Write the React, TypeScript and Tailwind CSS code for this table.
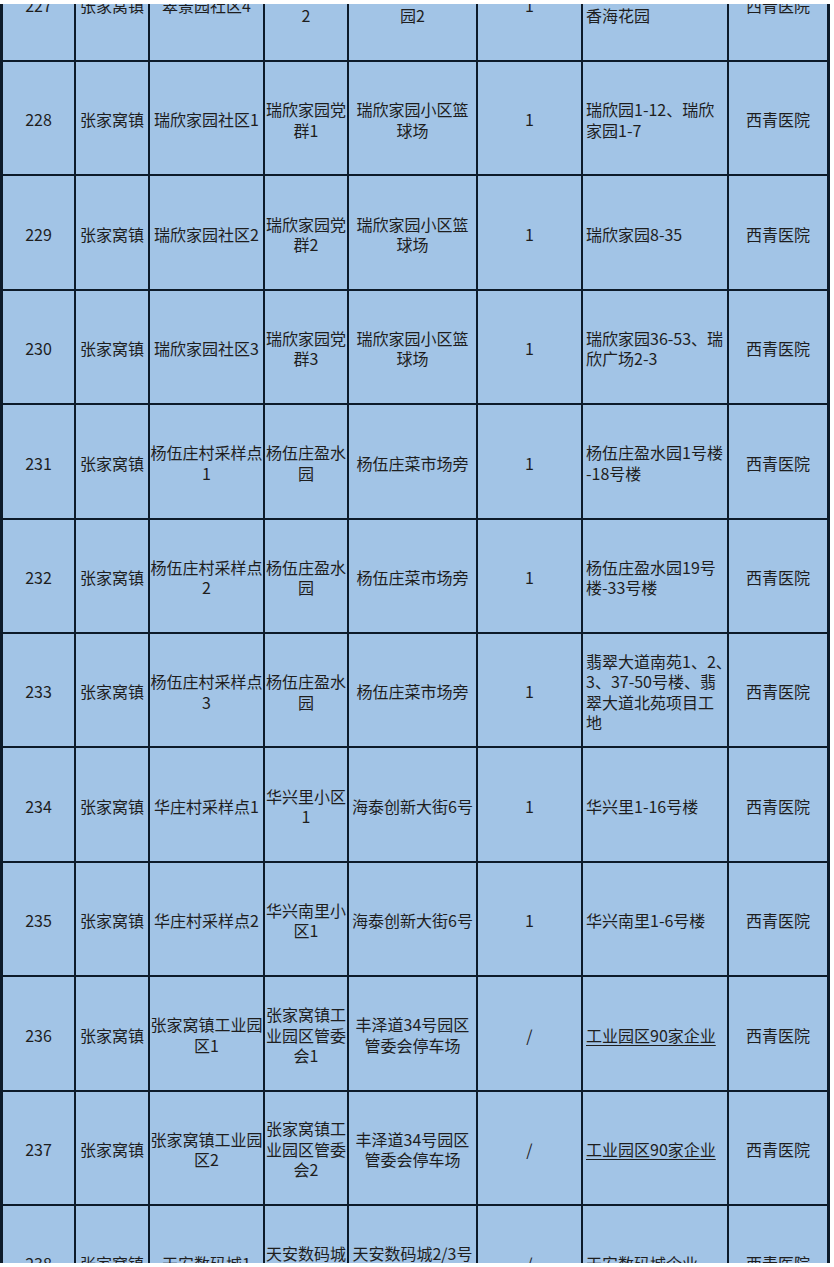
import React from 'react';

type Row = {
  no: string;
  town: string;
  site: string;
  group: string;
  place: string;
  count: string;
  area: string;
  hospital: string;
  link?: boolean;
};

const rows: Row[] = [
  { no: '227', town: '张家窝镇', site: '翠景园社区4', group: '翠景园党群\n2', place: '翠景园小区中心花\n园2', count: '1', area: '翠景园1-20号、\n香海花园', hospital: '西青医院' },
  { no: '228', town: '张家窝镇', site: '瑞欣家园社区1', group: '瑞欣家园党\n群1', place: '瑞欣家园小区篮\n球场', count: '1', area: '瑞欣园1-12、瑞欣\n家园1-7', hospital: '西青医院' },
  { no: '229', town: '张家窝镇', site: '瑞欣家园社区2', group: '瑞欣家园党\n群2', place: '瑞欣家园小区篮\n球场', count: '1', area: '瑞欣家园8-35', hospital: '西青医院' },
  { no: '230', town: '张家窝镇', site: '瑞欣家园社区3', group: '瑞欣家园党\n群3', place: '瑞欣家园小区篮\n球场', count: '1', area: '瑞欣家园36-53、瑞\n欣广场2-3', hospital: '西青医院' },
  { no: '231', town: '张家窝镇', site: '杨伍庄村采样点\n1', group: '杨伍庄盈水\n园', place: '杨伍庄菜市场旁', count: '1', area: '杨伍庄盈水园1号楼\n-18号楼', hospital: '西青医院' },
  { no: '232', town: '张家窝镇', site: '杨伍庄村采样点\n2', group: '杨伍庄盈水\n园', place: '杨伍庄菜市场旁', count: '1', area: '杨伍庄盈水园19号\n楼-33号楼', hospital: '西青医院' },
  { no: '233', town: '张家窝镇', site: '杨伍庄村采样点\n3', group: '杨伍庄盈水\n园', place: '杨伍庄菜市场旁', count: '1', area: '翡翠大道南苑1、2、\n3、37-50号楼、翡\n翠大道北苑项目工\n地', hospital: '西青医院' },
  { no: '234', town: '张家窝镇', site: '华庄村采样点1', group: '华兴里小区\n1\n', place: '海泰创新大街6号', count: '1', area: '华兴里1-16号楼', hospital: '西青医院' },
  { no: '235', town: '张家窝镇', site: '华庄村采样点2', group: '华兴南里小\n区1', place: '海泰创新大街6号', count: '1', area: '华兴南里1-6号楼', hospital: '西青医院' },
  { no: '236', town: '张家窝镇', site: '张家窝镇工业园\n区1', group: '张家窝镇工\n业园区管委\n会1', place: '丰泽道34号园区\n管委会停车场', count: '/', area: '工业园区90家企业', hospital: '西青医院', link: true },
  { no: '237', town: '张家窝镇', site: '张家窝镇工业园\n区2', group: '张家窝镇工\n业园区管委\n会2', place: '丰泽道34号园区\n管委会停车场', count: '/', area: '工业园区90家企业', hospital: '西青医院', link: true },
  { no: '238', town: '张家窝镇', site: '天安数码城1', group: '天安数码城\n管委会', place: '天安数码城2/3号\n楼门前广场', count: '/', area: '天安数码城企业', hospital: '西青医院', link: true },
];

const cell = 'bg-[#a2c4e6] flex items-center justify-center text-center whitespace-pre pt-[3px]';

const App: React.FC = () => {
  return (
    <div
      className="w-[834px] h-[1267px] bg-white overflow-hidden pt-[4px] text-[16px] leading-[20.5px] text-[#1e1e1e]"
      style={{ fontFamily: '"Noto Sans CJK SC", "Noto Sans", sans-serif' }}
    >
      <div className="h-[1259px] overflow-hidden">
        <div className="-mt-[56.4px] w-[830px] grid grid-cols-[71px_72px_113px_82px_127px_103px_144px_98px] auto-rows-[112.4px] gap-[2px] bg-[#0d1b2a] border-x-[3px] border-[#0d1b2a]">
          {rows.map((r) => (
            <React.Fragment key={r.no}>
              <div className={cell}>{r.no}</div>
              <div className={cell}>{r.town}</div>
              <div className={cell}>{r.site}</div>
              <div className={cell}>{r.group}</div>
              <div className={cell}>{r.place}</div>
              <div className={cell}>{r.count}</div>
              <div className="bg-[#a2c4e6] flex items-center justify-start text-left whitespace-pre pl-[3px] pt-[3px]">
                <span className={r.link ? 'underline underline-offset-[3px]' : ''}>{r.area}</span>
              </div>
              <div className={cell}>{r.hospital}</div>
            </React.Fragment>
          ))}
        </div>
      </div>
    </div>
  );
};

export default App;
